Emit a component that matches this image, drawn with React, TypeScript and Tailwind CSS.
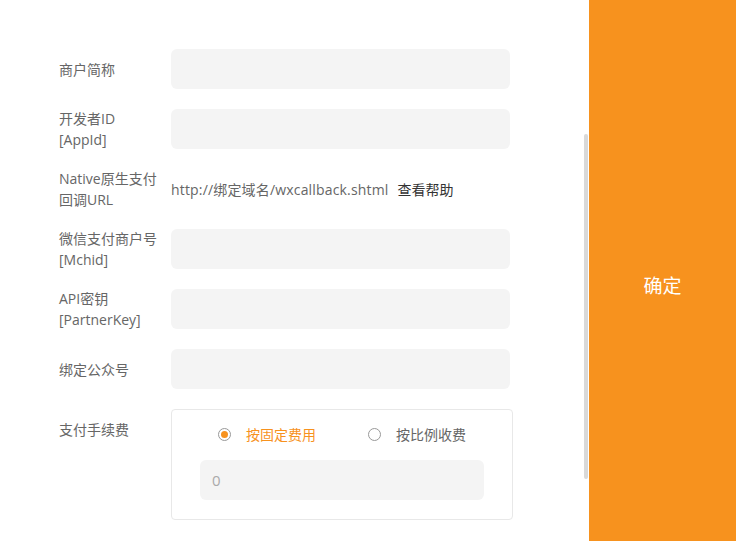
import { FC } from "react";

const font = { fontFamily: '"Open Sans", "Noto Sans CJK SC", sans-serif' };

const Field: FC<{ label: string[] }> = ({ label }) => (
  <div className="flex items-center h-[40px] mb-[20px]">
    <div className="w-[112px] pr-[8px] text-[14px] leading-[21px] text-[#666]">
      {label.map((l, i) => (
        <div key={i}>{l}</div>
      ))}
    </div>
    <div className="w-[339px] h-[40px] rounded-[6px] bg-[#f4f4f4]" />
  </div>
);

const Radio: FC<{ checked?: boolean; text: string }> = ({ checked, text }) => (
  <label className="flex items-center gap-[15px]">
    <span className="w-[13px] h-[13px] rounded-full border border-[#999] flex items-center justify-center bg-white">
      {checked && <span className="w-[7px] h-[7px] rounded-full bg-[#f7921e]" />}
    </span>
    <span className={`text-[14px] ${checked ? "text-[#f7921e]" : "text-[#666]"}`}>{text}</span>
  </label>
);

export default function App() {
  return (
    <div className="flex w-[736px] h-[541px] overflow-hidden bg-white" style={font}>
      <div className="relative w-[589px] h-full pl-[59px] pt-[49px]">
        <Field label={["商户简称"]} />
        <Field label={["开发者ID", "[AppId]"]} />
        <div className="flex items-center h-[40px] mb-[20px]">
          <div className="w-[112px] pr-[8px] text-[14px] leading-[21px] text-[#666]">
            <div>Native原生支付</div>
            <div>回调URL</div>
          </div>
          <span className="text-[14px] tracking-[0.17px] text-[#666]">http://绑定域名/wxcallback.shtml</span>
          <span className="ml-[9px] text-[14px] text-[#333]">查看帮助</span>
        </div>
        <Field label={["微信支付商户号", "[Mchid]"]} />
        <Field label={["API密钥", "[PartnerKey]"]} />
        <Field label={["绑定公众号"]} />
        <div className="flex items-start">
          <div className="w-[112px] h-[40px] flex items-center text-[14px] text-[#666]">支付手续费</div>
          <div className="w-[342px] h-[111px] rounded-[4px] border border-[#e8e8e8] pt-[14px] px-[28px]">
            <div className="flex justify-center items-center gap-[52px] h-[20px]">
              <Radio checked text="按固定费用" />
              <Radio text="按比例收费" />
            </div>
            <div className="mt-[16px] h-[40px] rounded-[6px] bg-[#f4f4f4] flex items-center px-[12px] text-[15px] text-[#aaa]">
              0
            </div>
          </div>
        </div>
        <div className="absolute right-[1px] top-[134px] w-[4px] h-[345px] rounded-full bg-[#d9d9d9]" />
      </div>
      <div className="flex-1 h-full bg-[#f7921e] flex items-center justify-center pt-[32px] text-white text-[19px]">
        确定
      </div>
    </div>
  );
}
